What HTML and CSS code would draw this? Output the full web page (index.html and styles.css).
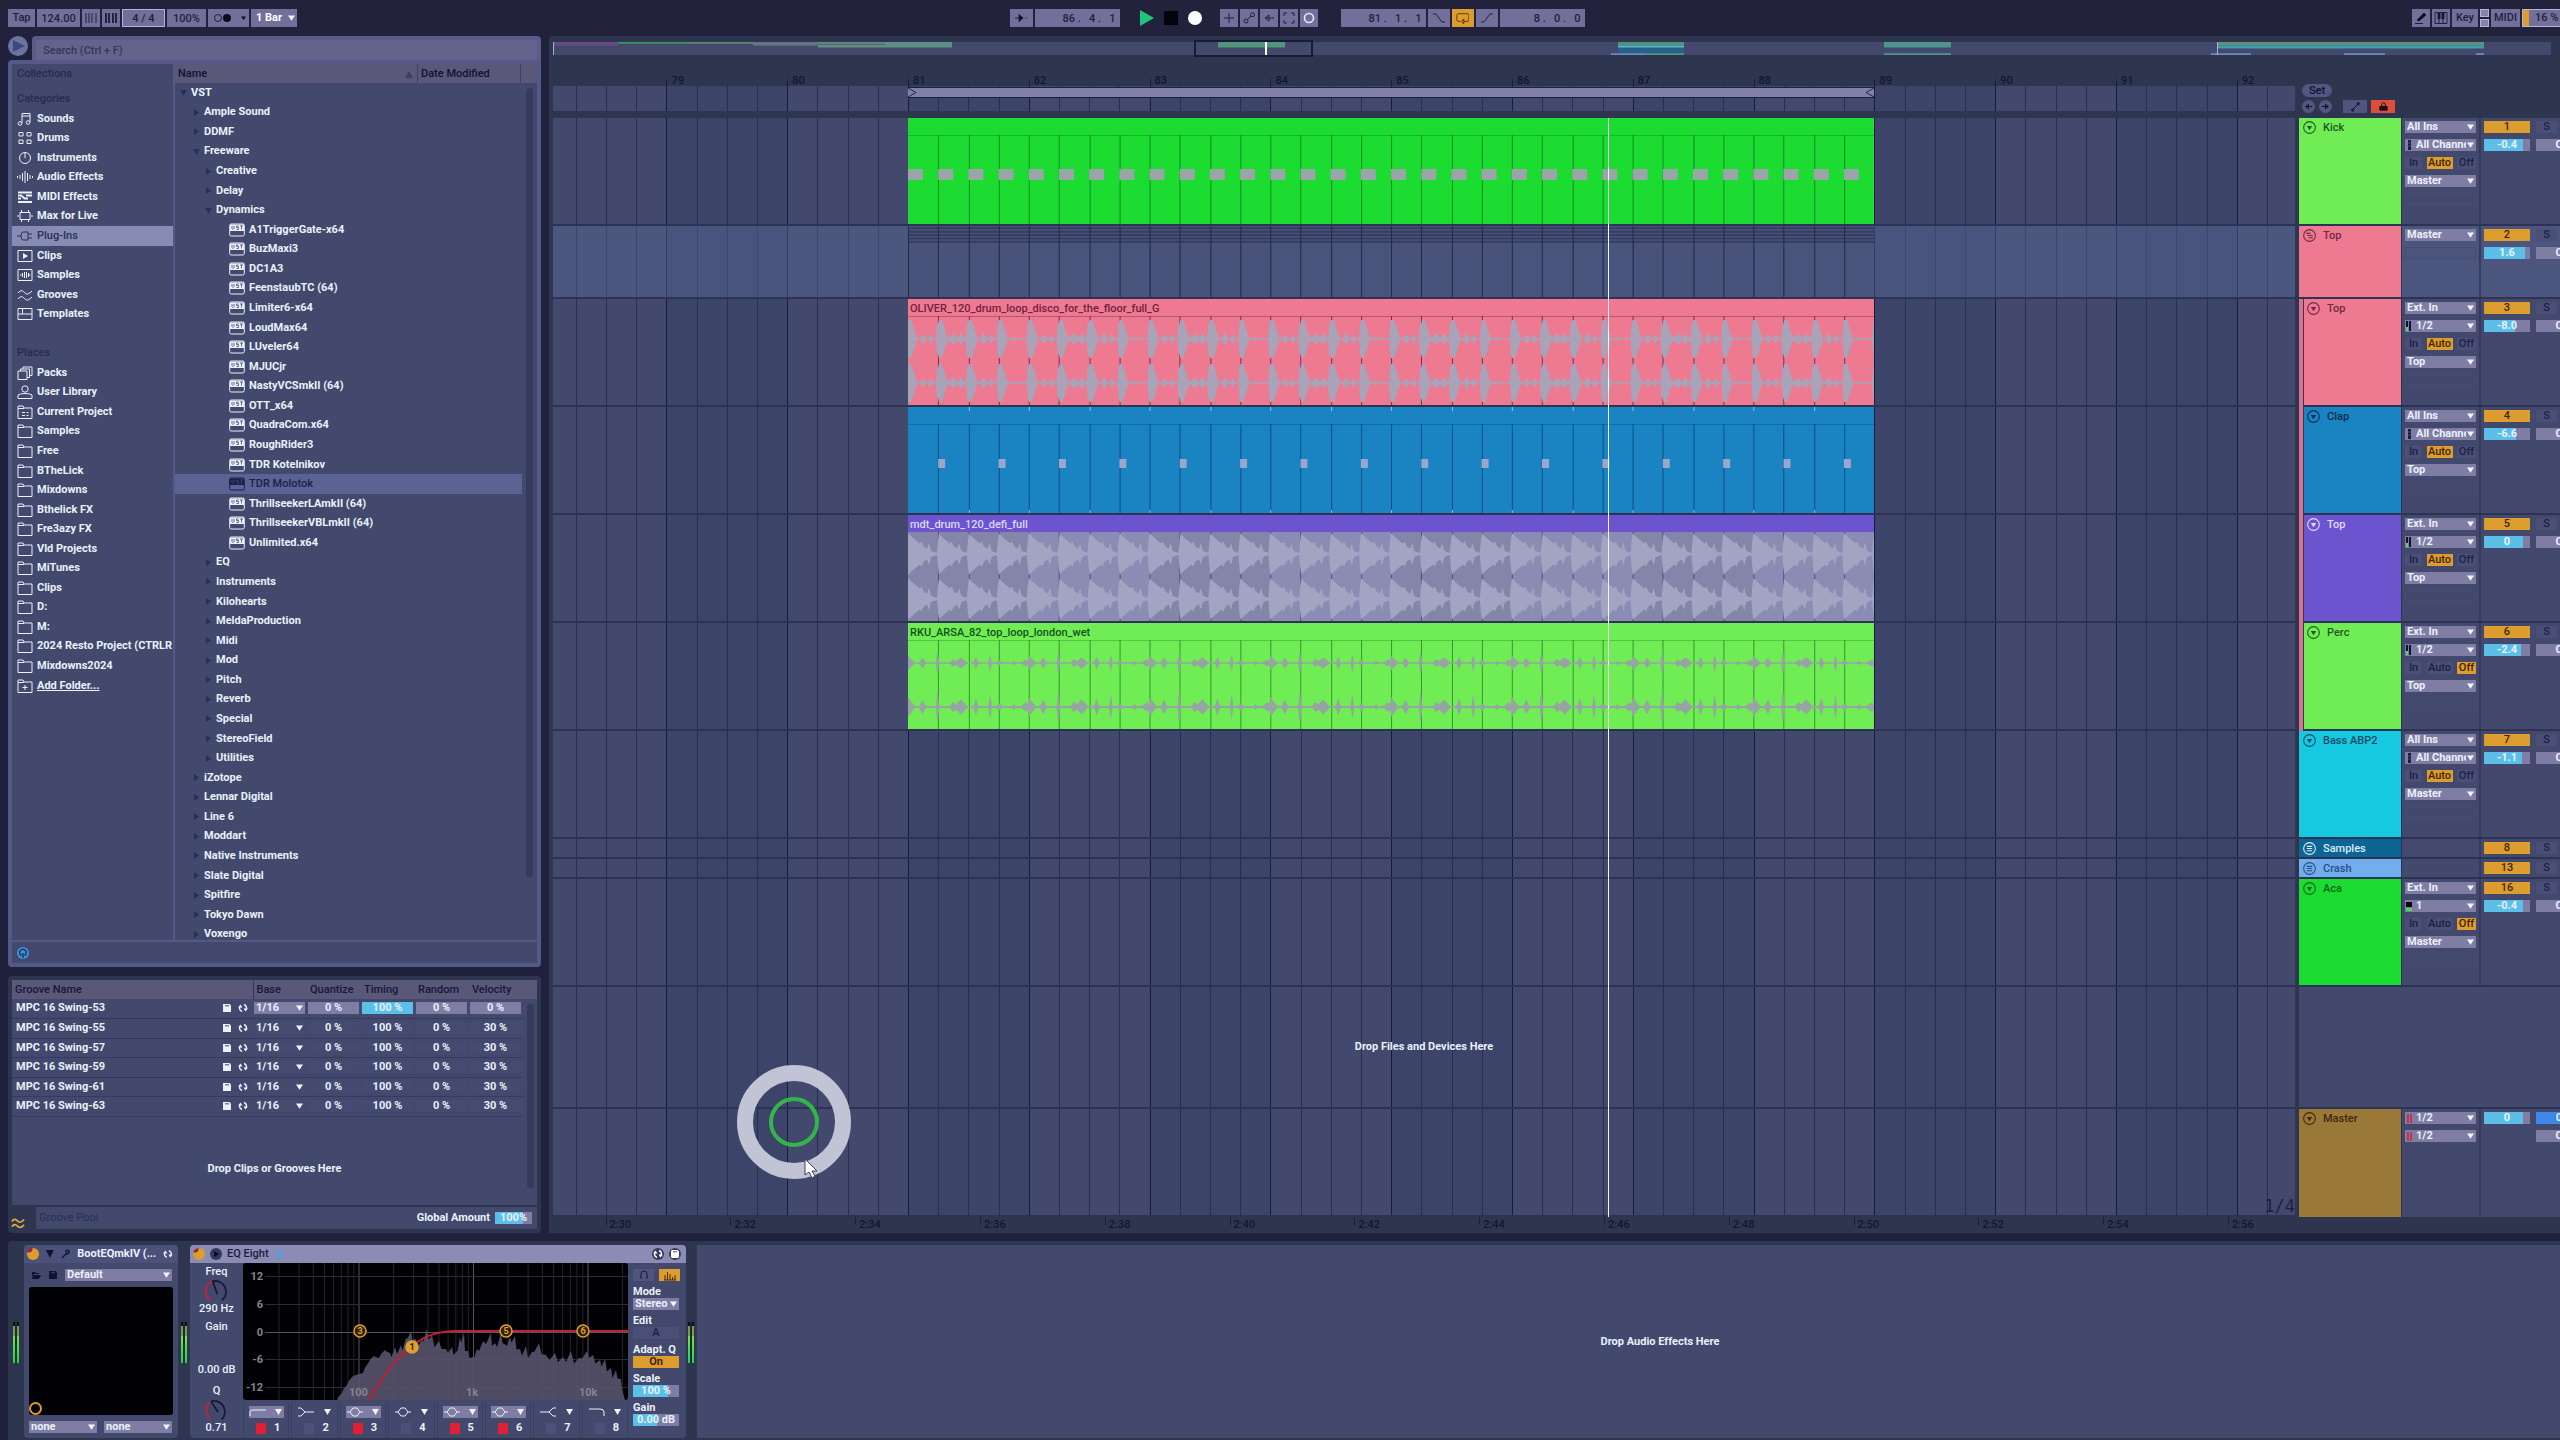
FILE: index.html
```html
<!DOCTYPE html>
<html lang="en">
<head>
    <meta charset="UTF-8">
    <meta name="viewport" content="width=device-width, initial-scale=1.0">
    <title>Arrangement View</title>
    <link rel="stylesheet" href="styles.css">
</head>
<body>
    <!-- icon set -->
    <svg class="symbols" width="0" height="0">
        <symbol id="i-note" viewBox="0 0 16 14"><path d="M5 11V1.5h8V10M5 4h8" /><circle cx="3" cy="11.5" r="1.8" /><circle cx="11" cy="10.5" r="1.8" /></symbol>
        <symbol id="i-drums" viewBox="0 0 16 14"><path d="M2 1.5h4v3.500H2zM10 1.500h4v3.500h-4zM2 9h4v3.500H2zM10 9h4v3.500h-4z" /></symbol>
        <symbol id="i-knob" viewBox="0 0 16 14"><circle cx="8" cy="7" r="5.500" /><path d="M8 1.500V7" /></symbol>
        <symbol id="i-wave" viewBox="0 0 16 14"><path d="M.5 6v2M3 5v4M5.500 3v8M8 1v12M10.500 3v8M13 5v4M15.500 6v2" /></symbol>
        <symbol id="i-midi" viewBox="0 0 16 14"><path d="M1 2.500h14M1 12h14M1 5.500h4M9 5.500h6M1 8.500h3M8 8.500h3M5 6l3 3" stroke-width="2" /></symbol>
        <symbol id="i-max" viewBox="0 0 16 14"><path d="M3 3.500h10v7H3zM4.500 1v2.500M11.500 1v2.500M4.500 10.500V13M11.500 10.500V13M1 6v2M15 6v2" /></symbol>
        <symbol id="i-plug" viewBox="0 0 16 14"><path d="M0 7h4M11 3H6Q4 3 4 7t2 4h5zM11 5h4M11 9h4" /></symbol>
        <symbol id="i-clip" viewBox="0 0 16 14"><path d="M1 1.500h14v11H1z" /><path d="M6 4l5 3-5 3z" fill="currentColor" stroke="none" /></symbol>
        <symbol id="i-sample" viewBox="0 0 16 14"><path d="M1 1.500h14v11H1zM3 7h1.500M5.500 5v4M7.500 4v6M9.500 4v6M11.500 5v4M12 7h1.500" /></symbol>
        <symbol id="i-groove" viewBox="0 0 16 14"><path d="M1 5c3-4 5-2 7 0s4 1 7-2M1 11c3-4 5-2 7 0s4 1 7-2" /></symbol>
        <symbol id="i-template" viewBox="0 0 16 14"><path d="M1 1.500h14v11H1zM1 7h14M5.500 1.500V7" /></symbol>
        <symbol id="i-packs" viewBox="0 0 16 14"><path d="M1 5h9v8.500H1zM3.500 5V3h9v8.500H10M6 3V1h9v8.500h-2.500" /></symbol>
        <symbol id="i-user" viewBox="0 0 16 14"><circle cx="8" cy="4" r="3.200" /><path d="M1 13.500V10q2-1.500 7-1.500T15 10v3.500z" /></symbol>
        <symbol id="i-project" viewBox="0 0 16 14"><path d="M1 13.500V1h5l1 2h8v10.500zM1 3.500h6M5 7.500h3M9.500 7.500h2M5 10.500h3M9.500 10.500h2" /></symbol>
        <symbol id="i-folder" viewBox="0 0 16 14"><path d="M1 13.500V1h5l1 2h8v10.500zM1 3.500h6" /></symbol>
        <symbol id="i-add" viewBox="0 0 16 14"><path d="M1 13.500V1h5l1 2h8v10.500zM1 3.500h6M8 6v5M5.500 8.500h5" /></symbol>
        <symbol id="i-vst" viewBox="0 0 16 14"><rect x=".7" y="1" width="14.600" height="12" rx="1.500" /><path d="M1 1.500h14V8H1z" fill="currentColor" stroke="none" /><path d="M3 3v2.500l1 1 1-1V3M9.500 3H7.500v1.500h2V6.500h-2M11 3h3M12.500 3v3.500" stroke="#42496c" stroke-width=".8" /></symbol>
        <symbol id="i-save" viewBox="0 0 10 10"><path d="M1 1h6.500L9 2.500V9H1z" fill="currentColor" stroke="none" /><path d="M3 2.800h4" stroke="#42496c" /></symbol>
        <symbol id="i-swap" viewBox="0 0 10 10"><path d="M4 8.500Q.5 7 2 3.500M6 1.500Q9.500 3 8 6.500" stroke-width="1.400" /><path d="M0 4.500L2.500 1.500 4.500 4.500zM10 5.500L7.500 8.500 5.500 5.500z" fill="currentColor" stroke="none" /></symbol>
        <symbol id="i-down" viewBox="0 0 12 12"><circle cx="6" cy="6" r="5.400" /><path d="M3.500 4.500h5L6 8.500z" fill="currentColor" stroke="none" /></symbol>
        <symbol id="i-group" viewBox="0 0 12 12"><circle cx="6" cy="6" r="5.400" /><path d="M3 4h4M4 6h5M5 8h4" /></symbol>
        <symbol id="i-lines" viewBox="0 0 12 12"><circle cx="6" cy="6" r="5.400" /><path d="M3.500 4h5M3.500 6h5M3.500 8h5" /></symbol>
        <symbol id="f-1" viewBox="0 0 18 10"><path d="M1 9V5q0-2 3-2h13" /></symbol>
        <symbol id="f-2" viewBox="0 0 18 10"><path d="M1 1h3l4 4h9M1 9h3l4-4" /></symbol>
        <symbol id="f-3" viewBox="0 0 18 10"><path d="M1 5h3l3-4h4l3 4h3M4 5l3 4h4l3-4" /></symbol>
        <symbol id="f-7" viewBox="0 0 18 10"><path d="M1 5h9l4-4h3M10 5l4 4h3" /></symbol>
        <symbol id="f-8" viewBox="0 0 18 10"><path d="M1 2h11q4 0 4 3v4" /></symbol>
    </svg>

    <header class="topbar">
        <div class="bar-group">
            <button class="tool w27">Tap</button>
            <input class="tool w43" aria-label="Tempo" value="124.00">
            <button class="tool w18" aria-label="Nudge down"><svg viewBox="0 0 14 12"><path d="M2 1v10M5 1v10M8 1v10M12 1v10" /></svg></button>
            <button class="tool w18 strong" aria-label="Nudge up"><svg viewBox="0 0 14 12"><path d="M2 1v10M5 1v10M9 1v10M12 1v10" stroke-width="1.500" /></svg></button>
            <input class="tool w43 lit" aria-label="Time signature" value="4 / 4">
            <input class="tool w39" aria-label="Groove amount" value="100%">
            <button class="tool w41 metro" aria-label="Metronome"><svg viewBox="0 0 34 12"><circle cx="6" cy="6" r="3.500" /><circle cx="15" cy="6" r="4" fill="#0b0c1c" stroke="none" /><path d="M29 4.500h5l-2.500 3.500z" fill="#0b0c1c" stroke="none" /></svg></button>
            <select class="tool quant" aria-label="Quantization"><option>1 Bar</option></select>
        </div>
        <div class="bar-group">
            <button class="tool w23" aria-label="Follow"><svg viewBox="0 0 14 12"><path d="M1 6h5M9.500 6h1M12 6h1" /><path d="M5 2.500L9 6l-4 3.500z" fill="#0b0c1c" /></svg></button>
            <input class="tool pos" aria-label="Position" value="86 .   4 .   1">
            <div class="transport">
                <button aria-label="Play"><svg viewBox="0 0 14 16"><path d="M0 0l14 8-14 8z" fill="#1fc57c" /></svg></button>
                <button aria-label="Stop"><svg viewBox="0 0 14 14"><path d="M0 0h14v14H0z" fill="#02030b" /></svg></button>
                <button aria-label="Record"><svg viewBox="0 0 14 14"><circle cx="7" cy="7" r="7" fill="#fff" /></svg></button>
            </div>
            <button class="tool w18" aria-label="Overdub"><svg viewBox="0 0 14 12"><path d="M7 1v10M2 6h10" /></svg></button>
            <button class="tool w18" aria-label="Automation arm"><svg viewBox="0 0 14 12"><circle cx="4" cy="9" r="2" /><circle cx="10.500" cy="2.800" r="2" /><path d="M5.500 7.500L9 4" /></svg></button>
            <button class="tool w18" aria-label="Re-enable automation"><svg viewBox="0 0 14 12"><path d="M3 6h9M7 3L3 6l4 3z" /></svg></button>
            <button class="tool w18" aria-label="Capture"><svg viewBox="0 0 14 12"><path d="M2 4V1h3M9 1h3v3M12 8v3H9M5 11H2V8" /></svg></button>
            <button class="tool w18" aria-label="Session record"><svg viewBox="0 0 14 12"><circle cx="7" cy="6" r="4.500" stroke="#e6e8fa" stroke-width="1.600" /></svg></button>
            <input class="tool pos loop-start" aria-label="Loop start" value="81 .   1 .   1">
            <button class="tool w22" aria-label="Punch in"><svg viewBox="0 0 14 12"><path d="M1 2h3l6 8h3" /></svg></button>
            <button class="tool w22 on" aria-label="Loop"><svg viewBox="0 0 16 14"><path d="M9 11h4q2 0 2-2V4q0-2-2-2H3Q1 2 1 4v5q0 2 2 2h2M9 8l-2.500 3L9 14z" /></svg></button>
            <button class="tool w22" aria-label="Punch out"><svg viewBox="0 0 14 12"><path d="M1 10h3l6-8h3" /></svg></button>
            <input class="tool pos" aria-label="Loop length" value="8 .   0 .   0">
        </div>
        <div class="bar-group right">
            <button class="tool w18" aria-label="Draw mode"><svg viewBox="0 0 14 12"><path d="M3 8l7-7 2 2-7 6zM1 11.500h8" fill="#0b0c1c" /></svg></button>
            <button class="tool w18" aria-label="Computer keyboard"><svg viewBox="0 0 14 12"><path d="M1 .5h12v11H1zM5 6v5M9 6v5" /><path d="M4 1h2v6H4zM8 1h2v6H8z" fill="#0b0c1c" /></svg></button>
            <button class="tool w26">Key</button>
            <span class="stack"><i></i><i></i></span>
            <button class="tool w29">MIDI</button>
            <span class="tool cpu">16 %</span>
        </div>
    </header>

    <main class="main">
        <div class="left">
            <section class="browser">
                <div class="search-row">
                    <button class="preview" aria-label="Preview"><svg viewBox="0 0 20 20"><path d="M5 4l12 6-12 6z" fill="#3d4a7c" /></svg></button>
                    <div class="search"><input type="text" aria-label="Search" placeholder="Search (Ctrl + F)"></div>
                </div>
                <div class="browser-body">
                    <nav class="places" id="places"></nav>
                    <div class="tree">
                        <div class="tree-head"><span>Name</span><svg viewBox="0 0 8 8"><path d="M4 1l4 7H0z" fill="#3e3d63" /></svg><span class="date">Date Modified</span></div>
                        <div class="tree-body">
                            <ul id="tree"></ul>
                            <div class="scroll"></div>
                        </div>
                    </div>
                    <div class="browser-foot"><svg viewBox="0 0 12 12"><circle cx="6" cy="6" r="6" fill="#4291d8" /><path d="M4.500 8.500a3.300 3.300 0 1 1 3 0M6 6v5" fill="none" stroke="#17386e" stroke-width="1.500" /></svg></div>
                </div>
            </section>

            <section class="groove">
                <div class="groove-list">
                    <table>
                        <thead>
                            <tr><th class="g-name">Groove Name</th><th>Base</th><th>Quantize</th><th>Timing</th><th>Random</th><th>Velocity</th></tr>
                        </thead>
                        <tbody id="grooves"></tbody>
                    </table>
                    <p class="groove-drop">Drop Clips or Grooves Here</p>
                    <div class="scroll"></div>
                </div>
                <div class="groove-foot">
                    <button class="groove-btn" aria-label="Groove pool"><svg viewBox="0 0 16 14"><use href="#i-groove" /></svg></button>
                    <div class="groove-bar">
                        <span class="dim">Groove Pool</span>
                        <label for="amount">Global Amount</label>
                        <input id="amount" class="val" value="100%">
                    </div>
                </div>
            </section>
        </div>

        <section class="arrange">
            <div class="overview">
                <svg viewBox="0 0 1998 14" preserveAspectRatio="none">
                    <path d="M0 0h1998v14H0z" fill="#42496c" />
                    <path d="M0 0h65v4H0z" fill="#694b82" /><path d="M65 0h68v2H65z" fill="#3a9469" />
                    <path d="M133 0h67v2h-67z" fill="#5f8378" /><path d="M200 0h65v4h-65z" fill="#6a7180" />
                    <path d="M265 0h134v6H265z" fill="#5c8f84" /><path d="M265 2h67v1h-67z" fill="#6e5367" />
                    <path d="M665 0h67v6h-67z" fill="#4f967c" />
                    <path d="M1065 0h66v14h-66z" fill="#276089" /><path d="M1065 0h66v4h-66zM1092 12h39v2h-39z" fill="#539180" /><path d="M1065 4h66v2h-66z" fill="#57b6c4" /><path d="M1058 12h34v2h-34z" fill="#7285c4" />
                    <path d="M1331 0h67v6h-67zM1331 12h67v2h-67z" fill="#4d958e" />
                    <path d="M1664 0h267v4h-267z" fill="#5c9180" /><path d="M1664 4h267v3h-267z" fill="#3b9eae" />
                    <path d="M1658 12h40v2h-40zM1791 12h41v2h-41zM1923 12h8v2h-8z" fill="#7285c4" />
                    <path d="M0 0h1v14H0zM1664 0h1v14h-1z" fill="#a9b0d0" />
                    <path d="M712 0h2v14h-2z" fill="#fff" />
                </svg>
                <div class="view-box"></div>
            </div>
            <div class="ruler" id="ruler"></div>
            <div class="ruler-tools">
                <button class="pill">Set</button>
                <div class="ruler-btns">
                    <button class="round" aria-label="Previous locator"><svg viewBox="0 0 12 12"><path d="M3 6h7M6 3.500L3 6l3 2.500z" /></svg></button>
                    <button class="round" aria-label="Next locator"><svg viewBox="0 0 12 12"><path d="M9 6H2M6 3.500L9 6 6 8.500z" /></svg></button>
                    <button class="flat" aria-label="Automation mode"><svg viewBox="0 0 12 12"><path d="M3 9l6-6M2 9h2v2H2zM8 2h2v2H8z" /></svg></button>
                    <button class="flat red" aria-label="Lock envelopes"><svg viewBox="0 0 12 12"><path d="M2 6h8v4H2z" fill="#1a0d1c" /><path d="M4 6V4q0-2 2-2t2 2v2" /></svg></button>
                </div>
            </div>
            <div class="lanes" id="lanes"></div>
            <div class="tracks" id="tracks"></div>
            <div class="times" id="times"></div>
        </section>
    </main>

    <section class="devices">
        <div class="meter"></div>
        <article class="device plugin">
            <header><i class="led"></i><svg class="tri" viewBox="0 0 8 8"><path d="M0 0h8L4 8z" /></svg><svg viewBox="0 0 10 10"><path d="M1 9l5-5M5 2q2-2 4 1l-3 2z" stroke="#15183a" fill="none" stroke-width="1.500" /></svg><b>BootEQmkIV (...</b><svg><use href="#i-swap" /></svg></header>
            <div class="preset">
                <svg viewBox="0 0 10 10"><path d="M1 2h3l1 1h3v1H3L1 8zM3 5h7L8 9H1z" fill="#10132d" stroke="none" /></svg>
                <svg class="dark"><use href="#i-save" /></svg>
                <select aria-label="Preset"><option>Default</option></select>
            </div>
            <div class="xy"><i></i></div>
            <div class="xy-sel">
                <select aria-label="X parameter"><option>none</option></select>
                <select aria-label="Y parameter"><option>none</option></select>
            </div>
        </article>
        <div class="meter"></div>
        <article class="device eq">
            <header><i class="led"></i><svg class="fold" viewBox="0 0 12 12"><circle cx="6" cy="6" r="6" fill="#34385f" /><path d="M4 3l5 3-5 3z" fill="#080a18" /></svg><span>EQ Eight</span><svg class="hand" viewBox="0 0 10 12"><path d="M1 5l2 1V1.500h1.200V5 .5h1.300V5 1h1.200v5l1-3h1L8 9l-2 3H4z" fill="#5a9be0" /></svg><svg class="cap"><use href="#i-swap" /></svg><svg class="cap"><use href="#i-save" /></svg></header>
            <div class="eq-body">
                <div class="eq-params">
                    <span>Freq</span>
                    <svg viewBox="0 0 30 28"><path d="M9 25A12 12 0 0 1 10 4" stroke="#c8203c" /><path d="M10 4a12 12 0 0 1 11 21M11 4l5 14" stroke="#14183a" /></svg>
                    <span>290 Hz</span>
                    <span class="gain">Gain</span>
                    <span class="db">0.00 dB</span>
                    <span>Q</span>
                    <svg viewBox="0 0 30 28"><path d="M9 25A12 12 0 0 1 9 5" stroke="#c8203c" /><path d="M9 5a12 12 0 0 1 12 20M9 5l8 12" stroke="#14183a" /></svg>
                    <span>0.71</span>
                </div>
                <div class="eq-main">
                    <svg id="eq" viewBox="0 0 385 137"></svg>
                    <div class="bands" id="bands"></div>
                </div>
                <div class="eq-side">
                    <div class="eq-icons">
                        <button aria-label="Audition"><svg viewBox="0 0 12 12"><path d="M3 8V5a3 3 0 0 1 6 0v3M3 7v3M9 7v3" stroke="#171a3a" /></svg></button>
                        <button class="amber" aria-label="Analyze"><svg viewBox="0 0 14 12"><path d="M1 11h12M2 11V6M4.500 11V3M7 11V5M9.500 11V8M12 11V6" stroke="#4a2b08" /></svg></button>
                    </div>
                    <label for="mode">Mode</label>
                    <select id="mode"><option>Stereo</option></select>
                    <label for="edit">Edit</label>
                    <button id="edit" class="off">A</button>
                    <label for="adapt">Adapt. Q</label>
                    <button id="adapt" class="amber">On</button>
                    <label for="scale">Scale</label>
                    <input id="scale" class="val" value="100 %">
                    <label for="gain">Gain</label>
                    <input id="gain" class="val half" value="0.00 dB">
                </div>
            </div>
        </article>
        <div class="meter"></div>
        <div class="drop-fx">Drop Audio Effects Here</div>
    </section>

    <script src="script.js"></script>
</body>
</html>
```

FILE: styles.css
```css
* {
    box-sizing: border-box;
}
body {
    --bg: #42496c;
    --edge: #2e354f;
    --field: #7f7da4;
    --amber: #dd9c2e;
    --cyan: #5cbfe8;
    --ink: #15183a;
    --arrow: url("data:image/svg+xml,%3Csvg xmlns='http://www.w3.org/2000/svg' viewBox='0 0 8 6'%3E%3Cpath d='M0 0h8L4 6z' fill='%23f2f6ff'/%3E%3C/svg%3E");
    margin: 0;
    height: 100vh;
    display: flex;
    flex-direction: column;
    overflow: hidden;
    background: #20213c;
    color: #e9f1fb;
    font: 500 11px/12px Roboto, "Liberation Sans", sans-serif;
}
button, input, select {
    font: inherit;
    color: inherit;
    border: 0;
    padding: 0;
    margin: 0;
    border-radius: 0;
    min-width: 0;
}
select {
    appearance: none;
    background: var(--field) var(--arrow) no-repeat right 2px center / 7px 6px;
    font-weight: 700;
    padding-left: 2px;
    height: 12px;
}
svg {
    display: block;
    fill: none;
    stroke: none;
}
symbol, .tool svg {
    stroke: currentColor;
}
.symbols {
    position: absolute;
}

/* top bar */
.topbar {
    display: grid;
    grid-template-columns: 1fr auto 1fr;
    align-items: center;
    flex: none;
    height: 36px;
    margin-right: -34px;
    padding: 0 8px;
    background: #22223d;
}
.bar-group {
    display: flex;
    align-items: center;
    gap: 2px;
}
.right {
    justify-content: flex-end;
    margin-right: -8px;
}
.tool {
    height: 18px;
    background-color: #72709a;
    color: #1e1f40;
    text-align: center;
}
.tool svg {
    height: 12px;
    margin: auto;
}
.w18 { width: 18px; }
.w22 { width: 22px; }
.w23 { width: 23px; }
.w26 { width: 26px; }
.w27 { width: 27px; }
.w29 { width: 29px; }
.w39 { width: 39px; }
.w41 { width: 41px; }
.w43 { width: 43px; }
.strong {
    color: #0b0c1c;
}
.lit {
    border: 1px solid #b3b4da;
}
.quant {
    width: 46px;
    color: #fff;
    text-align: left;
    padding-left: 5px;
}
.pos {
    width: 85px;
    text-align: right;
    padding-right: 4px;
    white-space: pre;
}
.on, .amber {
    background-color: var(--amber);
    color: #4a2b08;
}
.transport {
    display: flex;
    align-items: center;
    gap: 10px;
    margin: 0 16px 0 18px;
}
.transport button {
    width: 14px;
    background: none;
}
.loop-start {
    margin-left: 21px;
}
.stack {
    display: grid;
    gap: 2px;
}
.stack i {
    width: 9px;
    height: 8px;
    background: #8384ab;
    border: 1px solid #b3b4da;
}
.cpu {
    width: 72px;
    border: 1px solid #b3b4da;
    padding: 2px 0 0 12px;
    text-align: left;
    background: linear-gradient(90deg, var(--amber) 6px, #72709a 6px);
}

/* left column */
.main {
    flex: 1;
    min-height: 0;
    display: grid;
    grid-template-columns: 533px 1fr;
    gap: 8px;
    padding-left: 8px;
}
.left {
    display: flex;
    flex-direction: column;
    gap: 9px;
    min-height: 0;
}
.browser {
    flex: 1;
    min-height: 0;
    display: flex;
    flex-direction: column;
}
.search-row {
    display: flex;
    gap: 4px;
}
.preview {
    width: 20px;
    height: 20px;
    border-radius: 50%;
    background: #6b739f;
}
.search {
    flex: 1;
    padding: 4px 4px 0;
    background: #595b89;
    border-radius: 4px 4px 0 0;
}
.search input {
    width: 100%;
    height: 20px;
    padding-left: 7px;
    background: #64638b;
}
.search input::placeholder {
    color: #33365e;
}
.browser-body {
    flex: 1;
    min-height: 0;
    display: grid;
    grid-template: minmax(0, 1fr) 21px / 161px 1fr;
    gap: 2px;
    padding: 4px;
    background: #555988;
    border-radius: 4px 0 4px 4px;
}
.places, .tree, .browser-foot {
    background: var(--bg);
    min-height: 0;
}
.places {
    display: flex;
    flex-direction: column;
    overflow: hidden;
}
.places > * {
    flex: 1 0 0;
    min-height: 0;
    display: flex;
    align-items: center;
    gap: 4px;
    padding-left: 5px;
    color: inherit;
    text-decoration: none;
    white-space: nowrap;
    font-weight: 700;
}
.places svg, #tree .ico {
    flex: none;
    width: 16px;
    height: 14px;
}
.places h3 {
    margin: 0;
    font-size: 11px;
    font-weight: 500;
    color: #262b50;
}
.places .s3 { flex-grow: 0.3; }
.places .s10 { flex-grow: 1; }
.places .rest { flex-grow: 12.5; }
.places .cur {
    background: #868cb4;
    color: #2b305a;
    font-weight: 500;
}
.places .add {
    text-decoration: underline;
}
.tree {
    display: flex;
    flex-direction: column;
}
.tree-head {
    display: flex;
    align-items: center;
    flex: none;
    height: 19px;
    padding-left: 3px;
    background: #5a5878;
    color: #10122c;
}
.tree-head svg {
    width: 8px;
    margin: 0 4px 0 auto;
}
.tree-head .date {
    width: 104px;
    line-height: 19px;
    padding-left: 3px;
    margin-right: 16px;
    border: solid #3f3f60;
    border-width: 0 1px;
}
.tree-body {
    flex: 1;
    min-height: 0;
    display: flex;
    overflow: hidden;
}
#tree {
    flex: 1;
    height: calc(100% + 4px);
    display: grid;
    grid-auto-rows: 1fr;
    margin: 0;
    padding: 0;
    list-style: none;
    font-weight: 700;
}
#tree li {
    display: flex;
    align-items: center;
    gap: 4px;
    min-height: 0;
}
#tree .tw {
    width: 7px;
    height: 7px;
    fill: #283055;
}
#tree .l0 { padding-left: 5px; }
#tree .l1 { padding-left: 18px; }
#tree .l2 { padding-left: 30px; }
#tree .l4 { padding-left: 54px; }
#tree .cur {
    background: #5b6294;
    color: #1c2048;
    font-weight: 500;
}
.scroll {
    width: 7px;
    border-radius: 4px;
    background: #353b5c;
}
.tree .scroll {
    margin: 5px 4px 63px;
}
.browser-foot {
    grid-column: 1 / 3;
    padding: 5px;
}
.browser-foot svg {
    width: 12px;
}

/* groove pool */
.groove {
    display: flex;
    flex-direction: column;
    gap: 2px;
    height: 257px;
    padding: 4px;
    background: var(--edge);
    border-radius: 4px;
}
.groove-list {
    flex: 1;
    display: grid;
    grid-template: auto 1fr / 1fr 15px;
    background: linear-gradient(#5a5878 19px, var(--bg) 19px);
}
.groove table {
    border-collapse: collapse;
    table-layout: fixed;
    width: 509px;
    font-weight: 700;
}
.groove th {
    width: 54px;
    height: 19px;
    padding: 0 0 0 3px;
    text-align: left;
    font-weight: 500;
    color: #15173a;
}
.groove .g-name {
    width: 241px;
    border-right: 1px solid #34365a;
}
.groove td {
    height: 19px;
    padding: 0 1px;
    border-bottom: 1px solid #343b5e;
}
.groove tr:nth-child(even) td {
    height: 20px;
}
.groove td:first-child {
    padding-left: 4px;
}
.g-cell {
    display: flex;
    align-items: center;
    gap: 6px;
    padding-right: 4px;
}
.g-cell svg {
    width: 10px;
    height: 10px;
}
.g-cell span {
    flex: 1;
}
.groove td input, .groove td select {
    display: block;
    width: 51px;
    height: 12px;
    text-align: center;
    background-color: #454b70;
}
.groove td select {
    text-align: left;
}
.groove tr.first input, .groove tr.first select {
    background-color: var(--field);
}
.groove tr.first .full {
    background-color: var(--cyan);
}
.groove .scroll {
    grid-area: 1 / 2 / 3 / 3;
    margin: 24px 4px 17px;
}
.groove-drop {
    margin: 46px 0 0 14px;
    text-align: center;
    font-weight: 700;
}
.groove-foot {
    display: flex;
    height: 22px;
}
.groove-btn {
    width: 20px;
    height: 20px;
    margin: 6px 8px 0 -4px;
    padding: 3px;
    background: var(--edge);
    border-radius: 50%;
    color: #e0a63c;
}
.groove-btn use {
    stroke-width: 2;
}
.groove-bar {
    flex: 1;
    display: flex;
    align-items: center;
    gap: 5px;
    padding: 0 5px 0 3px;
    background: var(--bg);
    font-weight: 700;
}
.dim {
    flex: 1;
    font-weight: 400;
    color: #2a3054;
}
.val {
    height: 12px;
    font-weight: 700;
    text-align: center;
    background: linear-gradient(90deg, var(--cyan) 76%, var(--field) 76%);
}
.half {
    background: linear-gradient(90deg, var(--cyan) 52%, var(--field) 52%);
}
#amount {
    width: 37px;
}

/* arrangement */
.arrange {
    display: grid;
    grid-template-columns: minmax(0, 1fr) 261px;
    grid-template-rows: 13px 63px 1fr 16px;
    column-gap: 4px;
    padding: 6px 0 0 4px;
    min-width: 0;
    min-height: 0;
    background: var(--edge);
    border-radius: 4px 0 0 0;
    overflow: hidden;
}
.overview {
    grid-column: 1 / 3;
    margin-right: 9px;
    position: relative;
}
.overview > svg {
    width: 100%;
    height: 100%;
}
.view-box {
    position: absolute;
    left: 32.1%;
    width: 5.95%;
    top: -2px;
    bottom: -2px;
    border: 2px solid #171b33;
}
.ruler, .times {
    position: relative;
    overflow: hidden;
    color: #12152f;
}
.ruler .mark, .times .mark {
    position: absolute;
    top: 24px;
    height: 7px;
    border-left: 1px solid #1a1e3c;
    padding-left: 4px;
    line-height: 3px;
}
.times .mark {
    top: 0;
    height: 8px;
    line-height: 15px;
    padding-left: 3px;
}
.scrub {
    position: absolute;
    inset: 31px 0 7px;
    background: var(--bg);
}
.scrub svg, .grid svg {
    width: 100%;
    height: 100%;
}
.brace {
    position: absolute;
    left: 20.38%;
    width: 55.46%;
    top: 32px;
    height: 11px;
    background: #8180a7;
    border: 1px solid #1c2042;
    border-width: 1px 0;
    display: flex;
    justify-content: space-between;
}
.brace svg {
    width: 9px;
    height: 9px;
    stroke: #20244a;
}
.ruler-tools {
    padding: 29px 0 0 3px;
    color: #10132c;
}
.pill {
    display: block;
    width: 30px;
    height: 13px;
    margin-bottom: 3px;
    border-radius: 7px;
    background: #535683;
}
.ruler-btns {
    display: flex;
    gap: 4px;
}
.ruler-btns svg {
    height: 11px;
    margin: auto;
    stroke: #0b0c1c;
}
.round {
    width: 13px;
    height: 13px;
    border-radius: 50%;
    background: #535683;
}
.flat {
    width: 24px;
    height: 13px;
    background: #50547f;
}
.round + .flat {
    margin-left: 7px;
}
.flat.red {
    background: #dc4f3b;
}
.lanes {
    position: relative;
    display: flex;
    flex-direction: column;
    background: var(--bg);
}
.grid {
    position: absolute;
    inset: 0;
}
.lane, .track {
    position: relative;
    flex: none;
    height: 108px;
    border-bottom: 2px solid #2c3355;
}
.lane.group, .track.group { height: 73px; }
.lane.thin, .track.thin { height: 20px; }
.lane.drop, .track.drop {
    flex: 1;
}
.lane.group {
    background: rgba(92, 110, 158, 0.4);
}
.lane.drop {
    display: flex;
    align-items: center;
    justify-content: center;
    font-weight: 700;
}
.lane:last-child, .track:last-child {
    border-bottom: 0;
}
.clip {
    position: relative;
    margin-left: 20.38%;
    width: 55.46%;
    height: 100%;
}
.clip svg {
    position: absolute;
    inset: 0;
    width: 100%;
    height: 100%;
}
.clip b {
    position: relative;
    display: block;
    padding: 4px 0 0 2px;
    font-weight: 500;
}
.playhead {
    position: absolute;
    top: 0;
    bottom: 0;
    left: 60.55%;
    width: 1px;
    background: #f2f4fc;
}
.zoom-label {
    position: absolute;
    right: 0;
    bottom: 0;
    font: 17px/22px "DejaVu Sans Mono", monospace;
    color: #1b2040;
}
.click {
    position: absolute;
    left: 184px;
    top: 946px;
    width: 114px;
    height: 116px;
}
.tracks {
    display: flex;
    flex-direction: column;
    background: var(--bg);
}
.track {
    display: grid;
    grid-template-columns: 103px 79px 150px;
}
.track.group {
    background: #4b557e;
}
.track .name {
    display: flex;
    align-items: flex-start;
    gap: 7px;
    padding: 3px 0 0 4px;
    border-right: 1px solid #2c3355;
    background: var(--c);
}
.track.thin .name {
    padding-top: 3px;
}
/* children of a group keep the colour of the group along their left edge */
.track.child .name {
    border-left: 4px solid #d9738c;
    box-shadow: inset 1px 0 #35365a;
}
.track.child::before {
    content: "";
    position: absolute;
    left: 0;
    bottom: -2px;
    width: 4px;
    height: 2px;
    background: #d9738c;
}
.track .name svg {
    width: 13px;
    height: 13px;
}
.track .name span {
    line-height: 13px;
}
.io, .mix {
    display: grid;
    align-content: start;
    gap: 6px;
    padding: 3px;
    border-right: 2px solid #343b5e;
}
.io .sel {
    display: grid;
    grid-template-columns: auto 1fr;
    background: var(--field);
}
.io .ch {
    width: 9px;
    height: 12px;
}
.io select {
    width: 100%;
    min-width: 0;
    padding-right: 10px;
}
.mon {
    display: grid;
    grid-template-columns: 17px 26px 19px;
    justify-content: space-between;
}
.mon button, .solo, .off {
    height: 12px;
    background: #4b4f78;
    color: #1c2046;
    font-weight: 500;
}
.mon .on, .num, .amber {
    background: var(--amber);
    color: #3d2609;
}
.slot {
    height: 12px;
    border: 1px solid #464c72;
}
.mix {
    grid-template-columns: 46px auto;
    border: 0;
}
.num {
    width: 46px;
    height: 12px;
}
.solo {
    width: 21px;
}
.mix .vol, .mix .pan {
    width: 46px;
    height: 12px;
    text-align: center;
    font-weight: 700;
    background: linear-gradient(90deg, var(--cyan) var(--v), var(--field) var(--v));
}
.mix .pan {
    background: var(--field);
}
.mix .blue {
    background: #3f88ea;
}

/* device chain */
.devices {
    flex: none;
    display: flex;
    height: 199px;
    margin: 8px 0 0 8px;
    padding: 4px 0 2px 5px;
    background: var(--edge);
    border-radius: 4px 0 0 0;
    overflow: hidden;
}
.meter {
    flex: none;
    width: 6px;
    height: 41px;
    margin-top: 77px;
    background:
        linear-gradient(90deg, transparent 2px, #1b2a34 2px 4px, transparent 4px),
        linear-gradient(#0d1020 4px, #7b9a4a 4px 14px, #7be04a 14px, #18d65a 41px);
}
.device {
    flex: none;
    margin: 0 3px 0 5px;
    background: var(--bg);
    border-radius: 4px;
    overflow: hidden;
}
.plugin {
    width: 154px;
}
.eq {
    width: 496px;
    margin: 0 2px 0 3px;
}
.device header {
    display: flex;
    align-items: center;
    gap: 7px;
    height: 18px;
    padding: 0 5px 0 3px;
    background: #4b517a;
}
.device header svg {
    width: 10px;
    height: 10px;
}
.device header b {
    flex: 1;
    white-space: nowrap;
    font-weight: 700;
}
.device header .tri {
    width: 8px;
    height: 8px;
    fill: #10132d;
}
.led {
    width: 12px;
    height: 12px;
    border-radius: 50%;
    background: radial-gradient(circle at 2px 1px, #a02038 3px, var(--amber) 4px);
}
.device.eq header {
    gap: 5px;
    background: #8a8cb5;
    color: #1a1d40;
}
.device header .fold {
    width: 12px;
    height: 12px;
}
.eq header .hand {
    margin-right: auto;
}
.device header .cap {
    width: 12px;
    height: 12px;
    padding: 1px;
    border-radius: 50%;
    background: #34385f;
    color: #fff;
}
.preset {
    display: flex;
    align-items: center;
    gap: 7px;
    padding: 6px 6px 6px 7px;
}
.preset svg {
    width: 10px;
    height: 10px;
}
.preset .dark {
    color: #10132d;
}
.preset select {
    flex: 1;
}
.xy {
    height: 128px;
    margin: 0 5px;
    background: #020206;
    border-radius: 3px;
    display: flex;
    align-items: flex-end;
}
.xy i {
    width: 13px;
    height: 13px;
    border: 2px solid var(--amber);
    border-radius: 50%;
}
.xy-sel {
    display: flex;
    gap: 7px;
    padding: 6px 6px 0 5px;
}
.xy-sel select {
    flex: 1;
}
.eq-body {
    display: grid;
    grid-template-columns: 53px 385px 1fr;
    height: 175px;
    font-weight: 700;
}
.eq-params {
    display: flex;
    flex-direction: column;
    align-items: center;
    padding-top: 3px;
    font-weight: 500;
}
.eq-params svg {
    height: 25px;
    stroke-width: 2;
}
.eq-params .gain {
    margin-top: 6px;
}
.eq-params .db {
    margin: 31px 0 9px;
}
.eq-main svg {
    width: 100%;
}
.eq-main > svg {
    background: #020206;
    border-radius: 3px;
}
.eq-main text {
    fill: #85858f;
    font-size: 11px;
}
.eq-main text.k {
    fill: #e0a030;
    font-size: 9px;
    text-anchor: middle;
}
.eq-main text.k.sel {
    fill: #2b1a04;
}
.bands {
    display: grid;
    grid-template-columns: repeat(8, 1fr);
    gap: 2px;
    padding-top: 3px;
}
.band {
    display: grid;
    align-content: start;
    gap: 4px;
    height: 35px;
    padding: 3px 4px 0 5px;
    border: 1px solid #3a4064;
    border-width: 0 1px;
}
.band button {
    display: flex;
    align-items: center;
    height: 12px;
    background: none;
}
.band .act {
    background: var(--field);
}
.bands button svg {
    width: 18px;
    height: 10px;
}
.bands button svg + svg {
    width: 7px;
    height: 6px;
    margin: 0 2px 0 auto;
}
.band label {
    display: flex;
    align-items: center;
    gap: 8px;
    padding-left: 7px;
}
.band input {
    appearance: none;
    width: 10px;
    height: 11px;
    background: #4b517a;
}
.band input:checked {
    background: #e02033;
}
.eq-side {
    display: flex;
    flex-direction: column;
    padding: 6px 6px 0 5px;
}
.eq-side > label {
    margin-top: 4px;
    line-height: 13px;
}
.eq-side > select, .eq-side > input, .eq-side > button {
    width: 46px;
    height: 12px;
}
.eq-icons {
    display: flex;
    justify-content: space-between;
}
.eq-icons button {
    width: 21px;
    height: 12px;
    background-color: #4f557e;
}
.eq-icons button.amber {
    background-color: var(--amber);
}
.eq-icons svg {
    height: 12px;
    margin: auto;
}
.drop-fx {
    flex: 1;
    display: flex;
    align-items: center;
    justify-content: center;
    margin: 0 -63px 0 3px;
    background: var(--bg);
    font-weight: 700;
}
```

FILE: script.js
```javascript
const $ = id => document.getElementById(id);
const icon = (name, cls) => `<svg class="${cls || ""}"><use href="#${name}"/></svg>`;

// ---- browser ----
const categories = [
    ["note", "Sounds"], ["drums", "Drums"], ["knob", "Instruments"], ["wave", "Audio Effects"],
    ["midi", "MIDI Effects"], ["max", "Max for Live"], ["plug", "Plug-Ins"], ["clip", "Clips"],
    ["sample", "Samples"], ["groove", "Grooves"], ["template", "Templates"]
];
const folders = [
    ["packs", "Packs"], ["user", "User Library"], ["project", "Current Project"],
    ...["Samples", "Free", "BTheLick", "Mixdowns", "Bthelick FX", "Fre3azy FX", "Vld Projects", "MiTunes",
        "Clips", "D:", "M:", "2024 Resto Project (CTRLR", "Mixdowns2024"].map(n => ["folder", n]),
    ["add", "Add Folder..."]
];
const place = ([i, n]) =>
    `<a href="#" class="${n === "Plug-Ins" ? "cur" : ""}${i === "add" ? "add" : ""}">${icon("i-" + i)}${n}</a>`;
$("places").innerHTML = `<h3>Collections</h3><span class="s3"></span><h3>Categories</h3>${categories.map(place).join("")}
    <span class="s10"></span><h3>Places</h3>${folders.map(place).join("")}<span class="rest"></span>`;

// "-" closed folder, "+" open folder, "*" plug-in; the digit is the depth
const tree = `+0VST|-1Ample Sound|-1DDMF|+1Freeware|-2Creative|-2Delay|+2Dynamics|*4A1TriggerGate-x64|*4BuzMaxi3|*4DC1A3|*4FeenstaubTC (64)|*4Limiter6-x64|*4LoudMax64|*4LUveler64|*4MJUCjr|*4NastyVCSmkII (64)|*4OTT_x64|*4QuadraCom.x64|*4RoughRider3|*4TDR Kotelnikov|*4TDR Molotok|*4ThrillseekerLAmkII (64)|*4ThrillseekerVBLmkII (64)|*4Unlimited.x64|-2EQ|-2Instruments|-2Kilohearts|-2MeldaProduction|-2Midi|-2Mod|-2Pitch|-2Reverb|-2Special|-2StereoField|-2Utilities|-1iZotope|-1Lennar Digital|-1Line 6|-1Moddart|-1Native Instruments|-1Slate Digital|-1Spitfire|-1Tokyo Dawn|-1Voxengo`;
$("tree").innerHTML = tree.split("|").map(t => {
    const name = t.slice(2);
    const mark = t[0] === "*" ? icon("i-vst", "ico")
        : `<svg class="tw" viewBox="0 0 8 8"><path d="${t[0] === "+" ? "M0 1h8L4 8z" : "M1 0l6 4-6 4z"}"/></svg>`;
    return `<li class="l${t[1]}${name === "TDR Molotok" ? " cur" : ""}">${mark}${name}</li>`;
}).join("");

$("grooves").innerHTML = [53, 55, 57, 59, 61, 63].map((n, i) => {
    const cell = (label, v, cls) => `<td><input class="${cls || ""}" aria-label="${label} ${n}" value="${v} %"></td>`;
    return `<tr class="${i ? "" : "first"}"><td><div class="g-cell"><span>MPC 16 Swing-${n}</span>${icon("i-save")}${icon("i-swap")}</div></td>
        <td><select aria-label="Base ${n}"><option>1/16</option></select></td>
        ${cell("Quantize", 0)}${cell("Timing", 100, "full")}${cell("Random", 0)}${cell("Velocity", i ? 30 : 0)}</tr>`;
}).join("");

// ---- time grid: 1742 units wide, bar 81 starts at 355 ----
const WIDTH = 1742, START = 355, BEAT = 30.2;
function gridSvg() {
    let s = "";
    for (let b = -12; START + b * BEAT < WIDTH; b++) {
        const x = START + b * BEAT;
        const bar = Math.floor(b / 4);
        if (b % 4 === 0 && bar % 2 === 0) s += `<path d="M${x} 0h${BEAT * 4}v10h-${BEAT * 4}z" fill="#3d4469"/>`;
    }
    for (let b = -11; START + b * BEAT < WIDTH; b++) {
        const x = Math.round(START + b * BEAT);
        s += `<path d="M${x} 0h1v10h-1z" fill="${b % 4 ? "#272e52" : "#171c3c"}"/>`;
    }
    return `<svg viewBox="0 0 ${WIDTH} 10" preserveAspectRatio="none">${s}</svg>`;
}
let ruler = `<div class="scrub">${gridSvg()}</div>`;
for (let bar = 79; bar <= 92; bar++) {
    ruler += `<span class="mark" style="left:${(START + (bar - 81) * 4 * BEAT) / WIDTH * 100}%">${bar}</span>`;
}
ruler += `<div class="brace"><svg viewBox="0 0 9 9"><path d="M0 0l8 4.500L0 9"/></svg><svg viewBox="0 0 9 9"><path d="M9 0L1 4.500 9 9"/></svg></div>`;
$("ruler").innerHTML = ruler;

let times = "";
for (let i = 0; i < 14; i++) {
    times += `<span class="mark" style="left:${(52.6 + i * 124.8) / WIDTH * 100}%">2:${30 + i * 2}</span>`;
}
$("times").innerHTML = times;

// ---- clips, 968 x 106 units for 32 beats ----
const CLIP_BEAT = 968 / 32;
const blip = (t, at, w, h) => Math.max(0, h * (1 - Math.abs(t - at) / w));
const envelopes = {
    loop: b => {
        const t = b % 1, n = Math.floor(b) % 4;
        const hit = t < 0.1 ? 19 : t > 0.95 ? 14 : Math.max(0, 19 * (1 - (t - 0.1) / 0.2));
        const tail = n === 3 ? blip(t, 0.5, 0.1, 1) : blip(t, 0.5, 0.1, n === 2 ? 6 : 4) + blip(t, 0.75, 0.08, 4);
        return Math.min(19, hit + tail + (n === 1 ? 2 : 0.8));
    },
    pump: b => {
        const t = b % 1;
        return Math.min(22, 21 * Math.pow(1 - t, 1.5) + blip(t, 0.45, 0.06, 4) + blip(t, 0.7, 0.06, 8) + (t > 0.96 ? 14 : 1));
    },
    perc: b => {
        const t = b % 4;
        return 1 + blip(t, 0, 0.22, 8) + blip(t, 0.48, 0.1, 6) + blip(t, 0.98, 0.05, 18) + blip(t, 1.5, 0.1, 4)
            + blip(t, 1.75, 0.2, 6) + blip(t, 2.25, 0.08, 7) + blip(t, 2.72, 0.05, 12) + blip(t, 3.02, 0.08, 3)
            + blip(t, 3.5, 0.05, 2) + blip(t, 3.9, 0.15, 3);
    }
};
function wave(kind, mid, gain, fill) {
    const top = [], bottom = [];
    for (let x = 0; x <= 968; x++) {
        const a = envelopes[kind](x / CLIP_BEAT) * gain;
        top.push(`${x} ${(mid - a).toFixed(1)}`);
        bottom.unshift(`${x} ${(mid + a).toFixed(1)}`);
    }
    return `<path d="M${top.join("L")}L${bottom.join("L")}z" fill="${fill}"/>`;
}
function clip(c) {
    let s = `<path d="M0 0h968v106H0z" fill="${c.bg}"/>`;
    if (c.type === "pump") {
        s += `<path d="M0 17h968v89H0z" fill="#8a8cb4"/>`;
        for (let i = 0; i < 8; i += 2) s += `<path d="M${i * 121} 17h121v89h-121z" fill="#8385a9"/>`;
    }
    for (let b = 1; b < 32; b++) {
        s += `<path d="M${Math.round(b * CLIP_BEAT)} 17h1v89h-1z" fill="${c.line}"/>`;
        if (c.type === "notes2" && b % 2 === 0) s += `<path d="M${Math.round(b * CLIP_BEAT)} 0h1v4h-1zM${Math.round(b * CLIP_BEAT)} 103h1v3h-1z" fill="#8fc4ea"/>`;
    }
    if (c.type !== "pump") s += `<path d="M0 17h968v1H0z" fill="${c.line}" opacity=".45"/>`;
    if (c.type === "notes") for (let b = 0; b < 32; b++) s += `<path d="M${b * CLIP_BEAT} 51h15v11h-15z" fill="#9aa5a8"/>`;
    if (c.type === "notes2") for (let b = 1; b < 32; b += 2) s += `<path d="M${b * CLIP_BEAT} 52h7v9h-7z" fill="#9ba6cc"/>`;
    if (c.type === "loop") s += wave("loop", 40, 1, "#a9a3b9") + wave("loop", 84, 1, "#a9a3b9");
    if (c.type === "pump") s += wave("pump", 39, 0.95, "#a2a4c1") + wave("pump", 84, 0.95, "#a2a4c1");
    if (c.type === "perc") s += wave("perc", 40, 0.8, "#96a5a2") + wave("perc", 84, 1.1, "#96a5a2");
    return `<div class="clip"><svg viewBox="0 0 968 106" preserveAspectRatio="none">${s}</svg>${c.text ? `<b style="color:${c.ink}">${c.text}</b>` : ""}</div>`;
}
function groupStripes() {
    let s = `<path d="M0 0h968v106H0z" fill="#485179" opacity=".6"/>`;
    for (let i = 0; i < 5; i++) s += `<path d="M0 ${2 + i * 5}h968v3H0z" fill="#363d61"/>`;
    for (let b = 0; b < 32; b++) s += `<path d="M${Math.round(b * CLIP_BEAT)} 0h1v106h-1z" fill="#232948"/>`;
    return `<div class="clip"><svg viewBox="0 0 968 106" preserveAspectRatio="none">${s}</svg></div>`;
}

// ---- tracks ----
const tracks = [
    { name: "Kick", c: "#70ec55", ink: "#1f5a24", io: "midi", out: "Master", mon: 1, num: 1, vol: "-0.4", v: 85, clip: { type: "notes", bg: "#1cdc32", line: "#0b8f22" } },
    { name: "Top", c: "#ed7a90", ink: "#6d2a45", cls: "group", out: "Master", num: 2, vol: "1.6", v: 89 },
    { name: "Top", c: "#ed7a90", ink: "#6d2a45", cls: "child", io: "ext", out: "Top", mon: 1, num: 3, vol: "-8.0", v: 67, clip: { type: "loop", bg: "#ed7a90", line: "#7c2f50", ink: "#73213f", text: "OLIVER_120_drum_loop_disco_for_the_floor_full_G" } },
    { name: "Clap", c: "#1a83c2", ink: "#0e2a52", cls: "child", io: "midi", out: "Top", mon: 1, num: 4, vol: "-6.6", v: 70, clip: { type: "notes2", bg: "#1a83c2", line: "#0d4f86" } },
    { name: "Top", c: "#6d54cf", ink: "#e3dcff", cls: "child", io: "ext", out: "Top", mon: 1, num: 5, vol: "0", v: 85, clip: { type: "pump", bg: "#6d54cf", line: "#4c4d78", ink: "#dcd6fa", text: "mdt_drum_120_defi_full" } },
    { name: "Perc", c: "#70ec55", ink: "#1f5a24", cls: "child", io: "ext", out: "Top", mon: 2, num: 6, vol: "-2.4", v: 80, clip: { type: "perc", bg: "#70ec55", line: "#2f9a2c", ink: "#17501c", text: "RKU_ARSA_82_top_loop_london_wet" } },
    { name: "Bass ABP2", c: "#16c9e0", ink: "#0d4a66", io: "midi", out: "Master", mon: 1, num: 7, vol: "-1.1", v: 82 },
    { name: "Samples", c: "#0c6594", ink: "#dcecfa", cls: "thin", num: 8 },
    { name: "Crash", c: "#72aeee", ink: "#284e80", cls: "thin", num: 13 },
    { name: "Aca", c: "#1cdc32", ink: "#0c6420", io: "mono", out: "Master", mon: 2, num: 16, vol: "-0.4", v: 85 },
    { drop: true },
    { name: "Master", c: "#9a7838", ink: "#3c2a10", master: true, vol: "0", v: 85 }
];
const select = (label, text, ch) =>
    `<div class="sel">${ch ? `<svg class="ch" viewBox="0 0 9 12">${ch}</svg>` : "<i></i>"}<select aria-label="${label}"><option>${text}</option></select></div>`;
const chan = {
    midi: `<path d="M3 1h3v10H3z" fill="#1a1d38"/><path d="M3 4h3M3 7h3" stroke="#4e4f75"/>`,
    ext: `<path d="M1 1h2v10H1zM4 1h2v10H4z" fill="#10132c"/><path d="M1 7h2v4H1z" fill="#5fd06c"/>`,
    mono: `<path d="M1 2h6v5H1z" fill="#05060f"/><path d="M1 8h6v3H1z" fill="#4ed856"/>`,
    out: `<path d="M2 2h2v9H2zM5 2h2v9H5z" fill="#c8304c"/>`
};
function io(t) {
    if (t.master) return select("Cue out", "1/2", chan.out) + select("Master out", "1/2", chan.out);
    if (t.cls === "thin") return `<div class="slot"></div>`;
    let s = "";
    if (t.io) {
        s += select("Input type", t.io === "midi" ? "All Ins" : "Ext. In");
        s += select("Input channel", { midi: "All Channels", ext: "1/2", mono: "1" }[t.io], chan[t.io]);
        s += `<div class="mon">${["In", "Auto", "Off"].map((m, i) => `<button class="${i === t.mon ? "on" : ""}">${m}</button>`).join("")}</div>`;
    }
    return s + select("Output", t.out) + `<div class="slot"></div>`;
}
function mixer(t) {
    const vol = t.vol ? `<input class="vol" aria-label="Volume" value="${t.vol}" style="--v:${t.v}%">` : "";
    if (t.master) return `${vol}<input class="pan blue" aria-label="Cue volume" value="0"><i></i><input class="pan" aria-label="Pan" value="C">`;
    return `<button class="num">${t.num}</button><button class="solo">S</button>${vol}${vol ? `<input class="pan" aria-label="Pan" value="C">` : ""}`;
}
$("tracks").innerHTML = tracks.map(t => {
    if (t.drop) return `<div class="track drop"></div>`;
    const i = t.cls === "group" ? "i-group" : t.cls === "thin" ? "i-lines" : "i-down";
    return `<div class="track ${t.cls || ""}"><div class="name" style="--c:${t.c};color:${t.ink}">${icon(i)}<span>${t.name}</span></div>
        <div class="io">${io(t)}</div><div class="mix">${mixer(t)}</div></div>`;
}).join("");
$("lanes").innerHTML = `<div class="grid">${gridSvg()}</div>` + tracks.map(t => {
    const body = t.drop ? "Drop Files and Devices Here" : t.clip ? clip(t.clip) : t.cls === "group" ? groupStripes() : "";
    return `<div class="lane ${t.drop ? "drop" : t.cls || ""}">${body}</div>`;
}).join("") + `<div class="playhead"></div><div class="zoom-label">1/4</div>
    <svg class="click" viewBox="0 0 114 116"><circle cx="57" cy="58" r="49" stroke="#c0c4d5" stroke-width="16"/>
    <circle cx="57" cy="58" r="23" stroke="#33b54b" stroke-width="4"/>
    <path d="M68 95v16l4-3 3 6 3-2-3-5h5z" fill="#fff" stroke="#3b3f5c"/></svg>`;

// ---- EQ display ----
let eq = "";
for (let d = 0; d < 4; d++) {
    for (let n = 1; n < 10; n++) {
        const x = 116 + 114.5 * (d - 1 + Math.log10(n));
        if (x > 22 && x < 385) eq += `<path d="M${x.toFixed(1)} 0v137" stroke="${n === 1 ? "#55555c" : "#242428"}"/>`;
    }
}
[["12", 13], ["6", 41], ["0", 69], ["-6", 96], ["-12", 124]].forEach(([label, y]) => {
    eq += `<path d="M22 ${y}.5H385" stroke="${label === "0" ? "#55555c" : "#2c2c31"}"/><text x="20" y="${y + 4}" text-anchor="end">${label}</text>`;
});
const peaks = [[94, 137], [99, 130], [104, 122], [110, 113], [120, 110], [126, 99], [131, 93], [136, 95], [142, 87], [147, 90], [152, 84], [158, 82], [163, 75], [168, 68], [173, 76], [179, 77], [184, 66], [189, 72], [196, 78], [203, 86], [209, 84], [214, 88], [217, 74], [221, 70], [225, 88], [230, 94], [234, 86], [240, 78], [248, 70], [252, 80], [258, 70], [263, 82], [267, 74], [272, 73], [277, 86], [283, 83], [289, 89], [296, 80], [303, 92], [312, 90], [320, 94], [328, 88], [336, 95], [344, 88], [350, 92], [357, 97], [362, 96], [368, 105], [373, 107], [378, 116], [382, 137]];
const jag = peaks.slice(1).map(([x, y], i) => {
    const [px, py] = peaks[i];
    return `L${(px + x) / 2 - 1} ${(py + y) / 2 + (x > 150 && x < 380 ? 4 + (i * 7) % 6 : 0)}L${x} ${y}`;
}).join("");
eq += `<path d="M94 137${jag}z" fill="#56536d" opacity=".9"/>
    <path d="M126 137C140 112 152 96 168 84C180 74 190 69 212 68H385" stroke="#c41f34" stroke-width="2"/>
    <text x="106" y="133">100</text><text x="223" y="133">1k</text><text x="336" y="133">10k</text>`;
[[3, 117, 68], [5, 263, 68], [6, 340, 68], [1, 169, 84]].forEach(([n, x, y]) => {
    eq += `<circle cx="${x}" cy="${y}" r="6" fill="${n === 1 ? "#e0a030" : "#2f220e"}" stroke="#e0a030" stroke-width="1.500"/><text class="k ${n === 1 ? "sel" : ""}" x="${x}" y="${y + 3}">${n}</text>`;
});
$("eq").innerHTML = eq;

$("bands").innerHTML = [1, 2, 3, 3, 3, 3, 7, 8].map((shape, i) => {
    const on = [0, 2, 4, 5].includes(i);
    return `<div class="band"><button class="${on ? "act" : ""}" aria-label="Filter type ${i + 1}">${icon("f-" + shape)}<svg viewBox="0 0 8 7"><path d="M0 0h8L4 7z" fill="#f2f6ff"/></svg></button>
        <label><input type="checkbox" ${on ? "checked" : ""}>${i + 1}</label></div>`;
}).join("");
```
